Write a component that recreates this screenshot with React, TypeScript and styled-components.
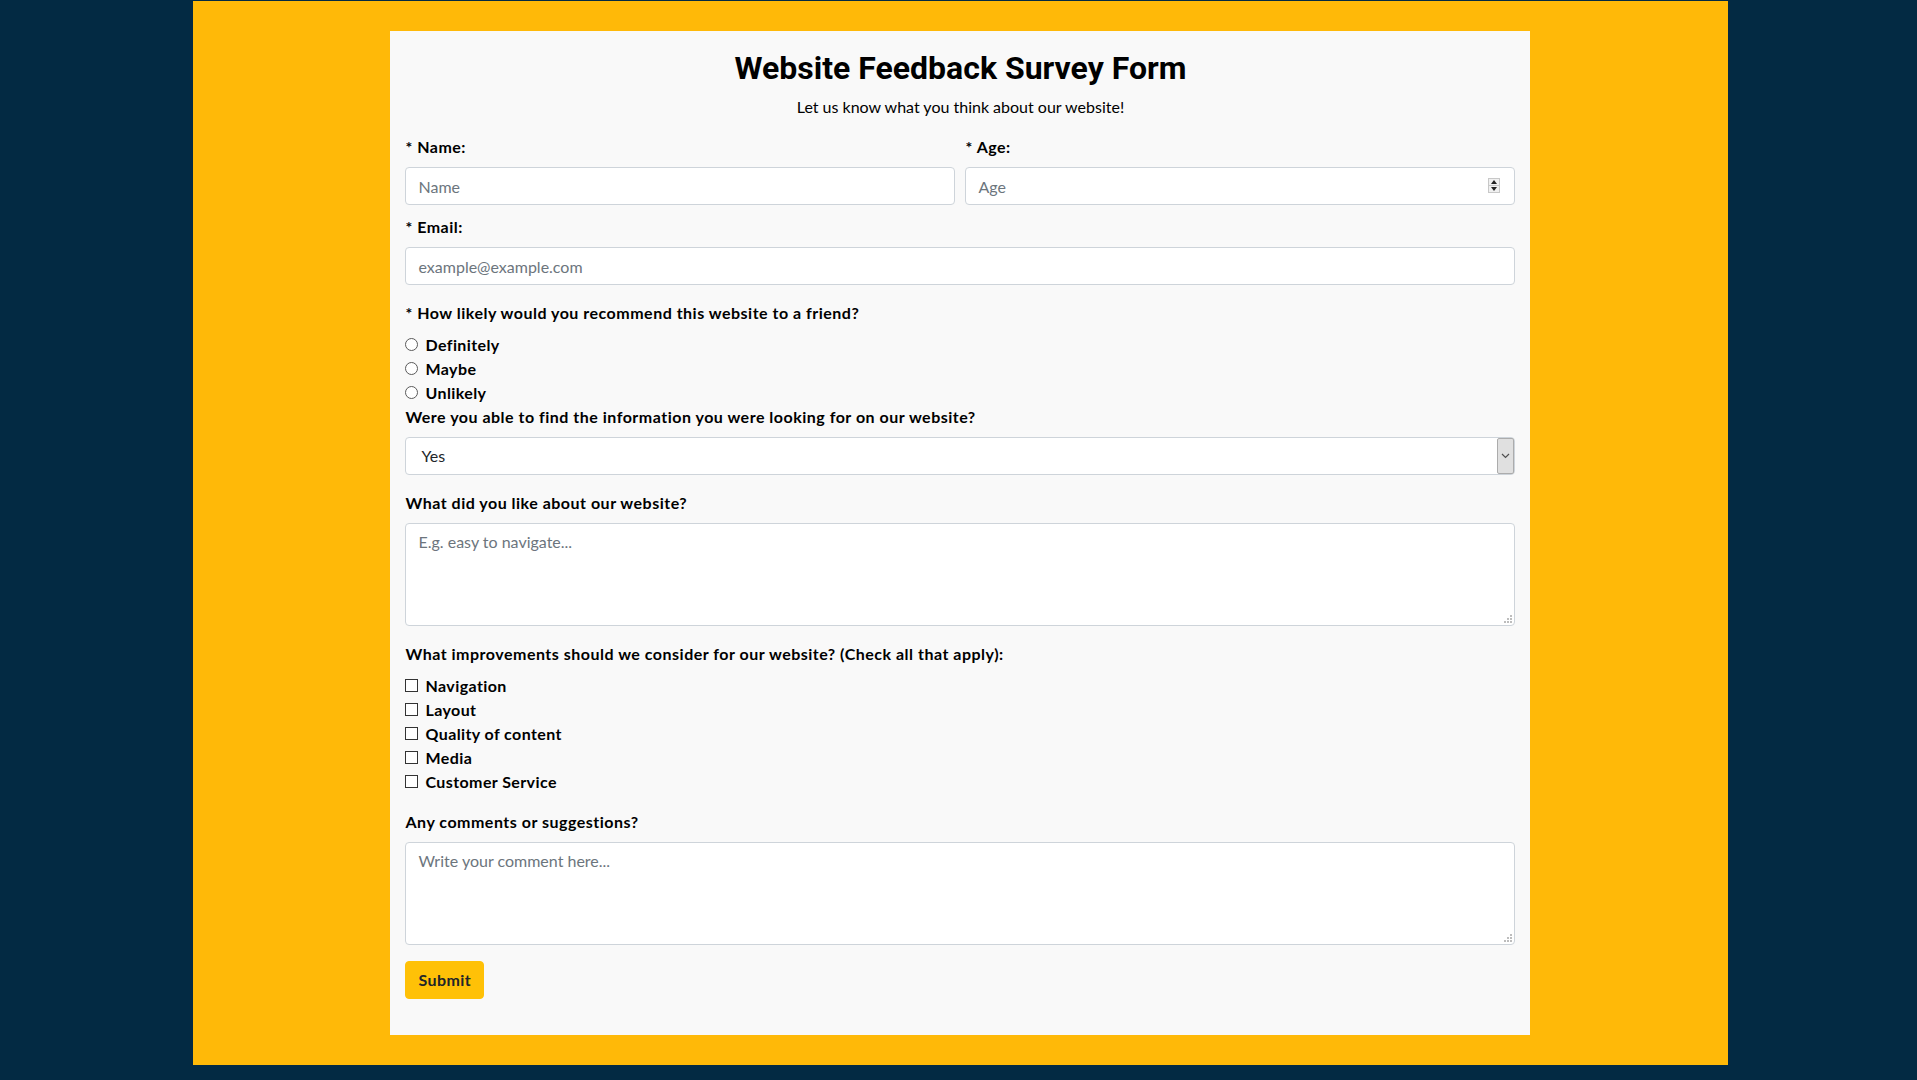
import React from 'react';
import styled, { createGlobalStyle } from 'styled-components';

const GlobalStyle = createGlobalStyle`
  *, *::before, *::after { box-sizing: border-box; }
  html, body { margin: 0; padding: 0; }
  body {
    background: #032a43;
    font-family: Lato, "Liberation Sans", sans-serif;
    font-size: 16px;
    line-height: 1.5;
    color: #000;
  }
`;

const Page = styled.div`
  padding-top: 1px;
  padding-bottom: 16px;
`;

const Frame = styled.main`
  width: calc(80% + 2px);
  margin-left: calc(10% + 1px);
  background: #ffb908;
  padding: 30px 0;
`;

const Card = styled.div`
  max-width: 1140px;
  margin: 0 auto;
  background: #f9f9f9;
  padding: 18px 15px 20px;
`;

const Title = styled.h1`
  margin: 0 0 8px;
  text-align: center;
  font-family: Roboto, "Liberation Sans", sans-serif;
  font-weight: 700;
  font-size: 32px;
  line-height: 38px;
  color: #000;
`;

const Description = styled.p`
  margin: 0 0 16px;
  text-align: center;
  font-size: 16px;
  line-height: 24px;
`;

const Row = styled.div`
  display: grid;
  grid-template-columns: 1fr 1fr;
  column-gap: 10px;
  margin-bottom: 10px;
`;

const Group = styled.div<{ $mb?: number }>`
  margin-bottom: ${(p) => (p.$mb ?? 16)}px;
`;

const Label = styled.label`
  display: block;
  font-weight: 700;
  margin-bottom: 8px;
  line-height: 24px;
  letter-spacing: 0.5px;
`;

const Field = styled.div`
  position: relative;
`;

const Input = styled.input`
  display: block;
  width: 100%;
  height: 38px;
  padding: 6px 12px;
  font-family: inherit;
  font-size: 16px;
  line-height: 24px;
  color: #495057;
  background: #fff;
  border: 1px solid #ced4da;
  border-radius: 4px;
  outline: none;
  &::placeholder { color: #6c757d; }
  &::-webkit-inner-spin-button,
  &::-webkit-outer-spin-button { -webkit-appearance: none; margin: 0; }
  -moz-appearance: textfield;
`;

const Spinner = styled.span`
  position: absolute;
  right: 15px;
  top: 11px;
  width: 12px;
  height: 15px;
  display: flex;
  flex-direction: column;
  border: 1px solid #c8c8c8;
  background: #f0f0f0;
`;

const SpinHalf = styled.span<{ $down?: boolean }>`
  flex: 1;
  display: flex;
  align-items: center;
  justify-content: center;
  border-top: ${(p) => (p.$down ? '1px solid #c8c8c8' : 'none')};
`;

const Select = styled.select`
  display: block;
  width: 100%;
  height: 38px;
  padding: 6px 15px;
  font-family: inherit;
  font-size: 16px;
  line-height: 24px;
  color: #212529;
  background: #fff;
  border: 1px solid #ced4da;
  border-radius: 4px;
  appearance: none;
  -webkit-appearance: none;
  outline: none;
`;

const SelectButton = styled.span`
  position: absolute;
  right: 1px;
  top: 1px;
  bottom: 1px;
  width: 17px;
  display: flex;
  align-items: center;
  justify-content: center;
  background: #e0e0e0;
  border: 1px solid #acacac;
  border-radius: 2px;
  pointer-events: none;
`;

const dot = (r: number, b: number) =>
  `linear-gradient(#bdbdbd, #bdbdbd) right ${r}px bottom ${b}px / 2px 2px no-repeat`;

const TextArea = styled.textarea`
  display: block;
  width: 100%;
  height: 103px;
  padding: 6px 12px;
  font-family: inherit;
  font-size: 16px;
  line-height: 24px;
  color: #495057;
  background: #fff;
  border: 1px solid #ced4da;
  border-radius: 4px;
  resize: vertical;
  outline: none;
  &::placeholder { color: #6c757d; }
  &::-webkit-resizer {
    background: ${[dot(2, 2), dot(5, 2), dot(8, 2), dot(2, 5), dot(5, 5), dot(2, 8)].join(', ')};
  }
`;

const Options = styled.div<{ $mb?: number }>`
  display: flex;
  flex-direction: column;
  margin-bottom: ${(p) => (p.$mb ?? 0)}px;
`;

const Option = styled.label`
  display: flex;
  align-items: flex-start;
  font-weight: 700;
  line-height: 24px;
  letter-spacing: 0.4px;
`;

const Choice = styled.input<{ $round?: boolean }>`
  appearance: none;
  -webkit-appearance: none;
  width: 13px;
  height: 13px;
  margin: 5px 7px 0 0;
  flex: none;
  background: #fff;
  border: 1px solid ${(p) => (p.$round ? '#5a5a5a' : '#333')};
  border-radius: ${(p) => (p.$round ? '50%' : '0')};
`;

const SubmitButton = styled.button`
  display: inline-block;
  height: 38px;
  padding: 6px 12px;
  font-family: inherit;
  font-size: 16px;
  font-weight: 700;
  line-height: 24px;
  letter-spacing: 0.4px;
  color: #212529;
  background: #ffc107;
  border: 1px solid #ffc107;
  border-radius: 4px;
  cursor: pointer;
`;

const recommend = ['Definitely', 'Maybe', 'Unlikely'];
const improvements = ['Navigation', 'Layout', 'Quality of content', 'Media', 'Customer Service'];

export default function App() {
  return (
    <>
      <GlobalStyle />
      <Page>
        <Frame>
          <Card>
            <Title id="title">Website Feedback Survey Form</Title>
            <Description id="description">Let us know what you think about our website!</Description>
            <form id="survey-form" onSubmit={(e) => e.preventDefault()}>
              <Row>
                <div>
                  <Label htmlFor="name">* Name:</Label>
                  <Input id="name" type="text" placeholder="Name" />
                </div>
                <div>
                  <Label htmlFor="number">* Age:</Label>
                  <Field>
                    <Input id="number" type="number" placeholder="Age" />
                    <Spinner aria-hidden>
                      <SpinHalf>
                        <svg width="6" height="4" viewBox="0 0 6 4"><path d="M0 4 L3 0 L6 4 Z" fill="#222" /></svg>
                      </SpinHalf>
                      <SpinHalf $down>
                        <svg width="6" height="4" viewBox="0 0 6 4"><path d="M0 0 L3 4 L6 0 Z" fill="#222" /></svg>
                      </SpinHalf>
                    </Spinner>
                  </Field>
                </div>
              </Row>
              <Group>
                <Label htmlFor="email">* Email:</Label>
                <Input id="email" type="email" placeholder="example@example.com" />
              </Group>
              <Label>* How likely would you recommend this website to a friend?</Label>
              <Options>
                {recommend.map((r) => (
                  <Option key={r}>
                    <Choice type="radio" $round name="recommend" value={r} />
                    {r}
                  </Option>
                ))}
              </Options>
              <Group>
                <Label htmlFor="dropdown">Were you able to find the information you were looking for on our website?</Label>
                <Field>
                  <Select id="dropdown" defaultValue="yes">
                    <option value="yes">Yes</option>
                    <option value="no">No</option>
                  </Select>
                  <SelectButton aria-hidden>
                    <svg width="9" height="6" viewBox="0 0 9 6"><path d="M1 1 L4.5 4.5 L8 1" fill="none" stroke="#505050" strokeWidth="1.2" /></svg>
                  </SelectButton>
                </Field>
              </Group>
              <Group>
                <Label htmlFor="like">What did you like about our website?</Label>
                <TextArea id="like" placeholder="E.g. easy to navigate..." />
              </Group>
              <Label>What improvements should we consider for our website? (Check all that apply):</Label>
              <Options $mb={16}>
                {improvements.map((i) => (
                  <Option key={i}>
                    <Choice type="checkbox" value={i} />
                    {i}
                  </Option>
                ))}
              </Options>
              <Group>
                <Label htmlFor="comments">Any comments or suggestions?</Label>
                <TextArea id="comments" placeholder="Write your comment here..." />
              </Group>
              <Group>
                <SubmitButton type="submit" id="submit">Submit</SubmitButton>
              </Group>
            </form>
          </Card>
        </Frame>
      </Page>
    </>
  );
}
